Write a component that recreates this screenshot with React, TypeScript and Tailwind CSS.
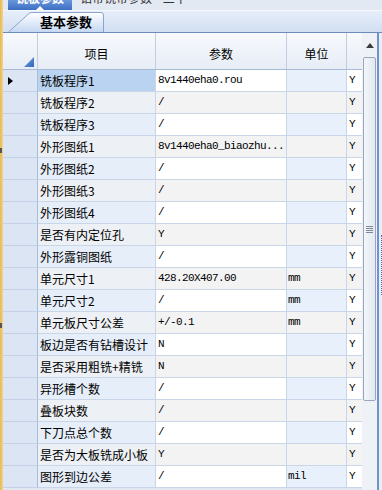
import React from 'react';

type Row = { item: string; value: string; unit: string; flag: string };

const rows: Row[] = [
  { item: '铣板程序1', value: '8v1440eha0.rou', unit: '', flag: 'Y' },
  { item: '铣板程序2', value: '/', unit: '', flag: 'Y' },
  { item: '铣板程序3', value: '/', unit: '', flag: 'Y' },
  { item: '外形图纸1', value: '8v1440eha0_biaozhu...', unit: '', flag: 'Y' },
  { item: '外形图纸2', value: '/', unit: '', flag: 'Y' },
  { item: '外形图纸3', value: '/', unit: '', flag: 'Y' },
  { item: '外形图纸4', value: '/', unit: '', flag: 'Y' },
  { item: '是否有内定位孔', value: 'Y', unit: '', flag: 'Y' },
  { item: '外形露铜图纸', value: '/', unit: '', flag: 'Y' },
  { item: '单元尺寸1', value: '428.20X407.00', unit: 'mm', flag: 'Y' },
  { item: '单元尺寸2', value: '/', unit: 'mm', flag: 'Y' },
  { item: '单元板尺寸公差', value: '+/-0.1', unit: 'mm', flag: 'Y' },
  { item: '板边是否有钻槽设计', value: 'N', unit: '', flag: 'Y' },
  { item: '是否采用粗铣+精铣', value: 'N', unit: '', flag: 'Y' },
  { item: '异形槽个数', value: '/', unit: '', flag: 'Y' },
  { item: '叠板块数', value: '/', unit: '', flag: 'Y' },
  { item: '下刀点总个数', value: '/', unit: '', flag: 'Y' },
  { item: '是否为大板铣成小板', value: 'Y', unit: '', flag: 'Y' },
  { item: '图形到边公差', value: '/', unit: 'mil', flag: 'Y' },
];

const cjk = "font-['Noto_Sans_CJK_SC','Noto_Sans',sans-serif]";
const mono = "font-['Liberation_Mono',monospace] text-[11px] tracking-[-0.6px]";
const cols = 'grid grid-cols-[35px_118px_131px_60px_15px]';

function DataRow({ row, index }: { row: Row; index: number }) {
  const odd = index % 2 === 0;
  const selected = index === 0;
  return (
    <div className={`${cols} h-[22px]`}>
      <div className="flex items-center pl-[5px] bg-[#dbe5f3] border-r border-r-[#a9bdd8] border-b border-b-[#c2d1e6]">
        {selected && (
          <svg width="5" height="8" viewBox="0 0 5 8">
            <path d="M0 0 L5 4 L0 8 Z" fill="#000" />
          </svg>
        )}
      </div>
      <div
        className={`flex items-center pl-[2px] border-r border-b border-[#c9d6e8] text-[12px] text-black whitespace-nowrap overflow-hidden ${cjk} ${
          selected ? 'bg-[#b9d3f1]' : odd ? 'bg-[#e6eef9]' : 'bg-[#edf0f4]'
        }`}
      >
        {row.item}
      </div>
      <div
        className={`flex items-center pl-[2px] border-r border-b border-[#c9d6e8] text-black whitespace-nowrap overflow-hidden ${mono} ${
          odd ? 'bg-white' : 'bg-[#f3f3f3]'
        }`}
      >
        {row.value}
      </div>
      <div
        className={`flex items-center pl-[1px] border-r border-b border-[#c9d6e8] text-black ${mono} ${
          odd ? 'bg-[#e8f0fb]' : 'bg-[#f3f3f3]'
        }`}
      >
        {row.unit}
      </div>
      <div
        className={`flex items-center pl-[2px] border-b border-[#c9d6e8] text-black ${mono} ${
          odd ? 'bg-white' : 'bg-[#f3f3f3]'
        }`}
      >
        {row.flag}
      </div>
    </div>
  );
}

export default function App() {
  return (
    <div className="flex w-[382px] h-[490px] overflow-hidden bg-[#dfe7f3]">
      {/* left docking strip */}
      <div className="w-[3px] flex flex-col bg-gradient-to-r from-[#e8b84f] to-[#f3d38c]">
        <div className="mt-[148px] h-[5px] w-[2px] bg-[#555]" />
        <div className="mt-[170px] h-[5px] w-[2px] bg-[#555]" />
      </div>

      <div className="flex-1 flex flex-col min-w-0">
        {/* outer tab strip, cut off at the top */}
        <div className="h-[10px] flex bg-[#e3e9f2] overflow-hidden">
          <div className="ml-[5px] w-[64px] flex flex-col items-center bg-gradient-to-b from-[#6a97dc] to-[#3d6fc2]">
            <div className={`-mt-[8px] text-[12px] leading-[12px] font-bold text-white whitespace-nowrap ${cjk}`}>
              铣板参数
            </div>
            <div className="flex-1" />
            <div className="w-0 h-0 border-x-[4px] border-x-transparent border-b-[4px] border-b-white" />
          </div>
          <div className={`ml-[8px] -mt-[8px] text-[12px] leading-[12px] text-[#333] whitespace-nowrap ${cjk}`}>
            钻带铣带参数 &nbsp;&nbsp; 二十
          </div>
        </div>

        {/* inner tab row */}
        <div className="h-[22px] flex border-t border-t-[#f4f7fc] bg-gradient-to-b from-[#e7eefa] to-[#d1dff2]">
          <div className="relative ml-[5px] mt-[1px] w-[96px] h-[20px] flex items-center">
            <svg className="absolute inset-0" width="96" height="20" viewBox="0 0 96 20">
              <defs>
                <linearGradient id="tabg" x1="0" y1="0" x2="0" y2="1">
                  <stop offset="0" stopColor="#ffffff" />
                  <stop offset="1" stopColor="#c5d8f2" />
                </linearGradient>
              </defs>
              <path
                d="M0.5 20 L21 1.5 Q22 0.5 24 0.5 L93 0.5 Q95.5 0.5 95.5 3 L95.5 20"
                fill="url(#tabg)"
                stroke="#8aa5c9"
              />
            </svg>
            <span className={`relative pl-[32px] text-[13px] font-bold text-black whitespace-nowrap ${cjk}`}>
              基本参数
            </span>
          </div>
        </div>

        {/* grid + scrollbar */}
        <div className="flex-1 flex border-t border-t-[#6c8bb8] min-h-0">
          <div className="w-[359px] flex flex-col overflow-hidden">
            <div className={`${cols} h-[37px] border-b border-b-[#a9bbd3] bg-gradient-to-b from-[#f7f9fd] to-[#e7edf6] text-[12px] text-black ${cjk}`}>
              <div className="flex items-end justify-end pr-[3px] pb-[2px] border-r border-r-[#c0cee0]">
                <svg width="10" height="10" viewBox="0 0 10 10">
                  <defs>
                    <linearGradient id="trig" x1="0" y1="0" x2="1" y2="1">
                      <stop offset="0" stopColor="#7fa7e0" />
                      <stop offset="1" stopColor="#2f64b8" />
                    </linearGradient>
                  </defs>
                  <path d="M10 0 L10 10 L0 10 Z" fill="url(#trig)" />
                </svg>
              </div>
              <div className="flex items-center justify-center pt-[5px] border-r border-r-[#c0cee0]">项目</div>
              <div className="flex items-center justify-center pt-[5px] border-r border-r-[#c0cee0]">参数</div>
              <div className="flex items-center justify-center pt-[5px] border-r border-r-[#c0cee0]">单位</div>
              <div />
            </div>
            {rows.map((r, i) => (
              <DataRow key={i} row={r} index={i} />
            ))}
          </div>

          {/* vertical scrollbar */}
          <div className="w-[15px] flex flex-col bg-[#eef1f5]">
            <div className="h-[24px] flex justify-center pt-[10px]">
              <svg width="8" height="5" viewBox="0 0 8 5">
                <path d="M4 0 L8 5 L0 5 Z" fill="#3c3c3c" />
              </svg>
            </div>
            <div className="ml-[1px] w-[13px] h-[344px] flex flex-col items-center justify-center gap-[1px] rounded-[2px] border border-[#97a6bc] bg-gradient-to-r from-[#f3f6fa] to-[#e3e9f1]">
              <div className="w-[7px] h-[1px] bg-[#7d8796]" />
              <div className="w-[7px] h-[1px] bg-[#7d8796]" />
              <div className="w-[7px] h-[1px] bg-[#7d8796]" />
              <div className="w-[7px] h-[1px] bg-[#7d8796]" />
            </div>
          </div>
          <div className="w-[2px] bg-[#6f93c9]" />
          <div className="w-[3px] flex flex-col bg-[#e8eef7]">
            <div className="mt-[202px] ml-[2px] w-[1px] h-[60px] border-l border-dotted border-l-[#4c72b0]" />
          </div>
        </div>
      </div>
    </div>
  );
}
